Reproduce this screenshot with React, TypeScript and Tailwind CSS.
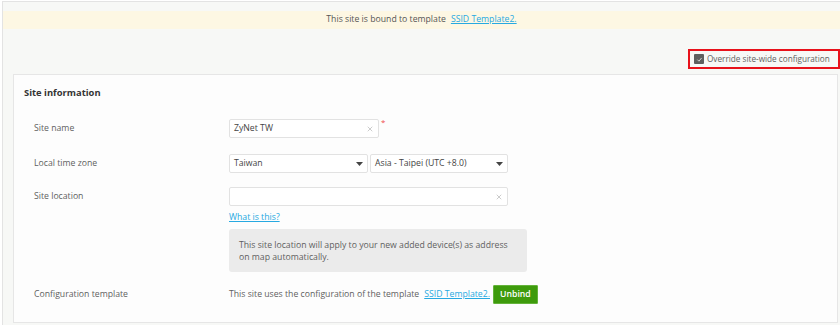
import { X } from 'lucide-react'

const font = { fontFamily: '"Open Sans", "Noto Sans", sans-serif' }

function Caret () {
  return (
    <svg width="7" height="4" viewBox="0 0 7 4" className="shrink-0">
      <path d="M0 0 L7 0 L3.5 4 Z" fill="#444" />
    </svg>
  )
}

function Row ({ label, children, top }: { label: string, children: React.ReactNode, top?: boolean }) {
  return (
    <div className={`flex ${top ? 'items-start' : 'items-center'}`}>
      <div className={`w-[215px] shrink-0 pl-[20px] text-[8.7px] text-[#5f5f5f] ${top ? 'pt-[3px]' : ''}`}>{label}</div>
      <div className="flex-1">{children}</div>
    </div>
  )
}

export default function App () {
  return (
    <div className="w-[840px] h-[325px] bg-white overflow-hidden text-[#444]" style={font}>
      <div className="ml-[2px] mt-[1px] h-[324px] bg-[#f7f8f6] border-t border-l border-[#e3e3e3] flex flex-col pb-[2px]">
        <div className="mt-[9px] h-[18px] bg-[#fdf7e3] flex items-center justify-center text-[8.7px] text-[#555]">
          This site is bound to template
          <a className="ml-[5px] text-[#27a9e1] underline">SSID Template2.</a>
        </div>

        <div className="flex justify-end mt-[20px]">
          <div className="h-[20px] w-[152px] border-2 border-[#e8121b] flex items-center pl-[4px] gap-[3px]">
            <span className="w-[10px] h-[10px] bg-[#5f5f5f] rounded-[1px] flex items-center justify-center shrink-0">
              <svg width="7" height="7" viewBox="0 0 10 10"><path d="M2 5.2 L4.2 7.4 L8 2.8" stroke="#ddd" strokeWidth="1.3" fill="none" /></svg>
            </span>
            <span className="text-[8.2px] text-[#5f5f5f] whitespace-nowrap">Override site-wide configuration</span>
          </div>
        </div>

        <div className="ml-[10px] mr-[2px] mt-[5px] flex-1 bg-[#fdfdfd] border border-[#e6e6e6] pt-[12px]">
          <div className="pl-[10px] text-[9.4px] leading-[12px] font-bold text-[#333]">Site information</div>

          <div className="mt-[20px] flex flex-col">
            <Row label="Site name">
              <div className="flex items-start">
                <div className="w-[150px] h-[19px] bg-white border border-[#e2e2e2] rounded-[2px] flex items-center justify-between px-[4px] text-[8.7px] text-[#444]">
                  ZyNet TW
                  <X size={8} strokeWidth={1.5} className="text-[#999]" />
                </div>
                <span className="ml-[2px] -mt-[3px] text-[8px] text-[#f04b4b]">*</span>
              </div>
            </Row>

            <div className="h-[16px]" />
            <Row label="Local time zone">
              <div className="flex gap-[2px]">
                <div className="w-[139px] h-[19px] bg-white border border-[#e2e2e2] rounded-[2px] flex items-center justify-between px-[4px] text-[8.7px]">
                  Taiwan
                  <Caret />
                </div>
                <div className="w-[138px] h-[19px] bg-white border border-[#e2e2e2] rounded-[2px] flex items-center justify-between px-[4px] text-[8.7px]">
                  Asia - Taipei (UTC +8.0)
                  <Caret />
                </div>
              </div>
            </Row>

            <div className="h-[14px]" />
            <Row label="Site location" top>
              <div className="w-[279px] h-[19px] bg-white border border-[#e2e2e2] rounded-[2px] flex items-center justify-end px-[4px]">
                <X size={8} strokeWidth={1.5} className="text-[#999]" />
              </div>
              <a className="block mt-[6px] text-[8.7px] leading-[11px] text-[#27a9e1] underline">What is this?</a>
              <div className="mt-[6px] w-[298px] h-[43px] bg-[#ebebeb] rounded-[3px] px-[10px] pt-[10px] text-[8.7px] leading-[12px] text-[#5f5f5f]">
                This site location will apply to your new added device(s) as address on map automatically.
              </div>
            </Row>

            <div className="h-[13px]" />
            <Row label="Configuration template">
              <div className="flex items-center text-[8.7px] text-[#5f5f5f]">
                This site uses the configuration of the template
                <a className="ml-[5px] text-[#27a9e1] underline">SSID Template2.</a>
                <button className="ml-[3px] h-[19px] px-[6px] bg-[#3e9b0c] border border-[#64b33a] text-white font-semibold text-[8.7px] rounded-[1px]">Unbind</button>
              </div>
            </Row>
          </div>
        </div>
      </div>
    </div>
  )
}
